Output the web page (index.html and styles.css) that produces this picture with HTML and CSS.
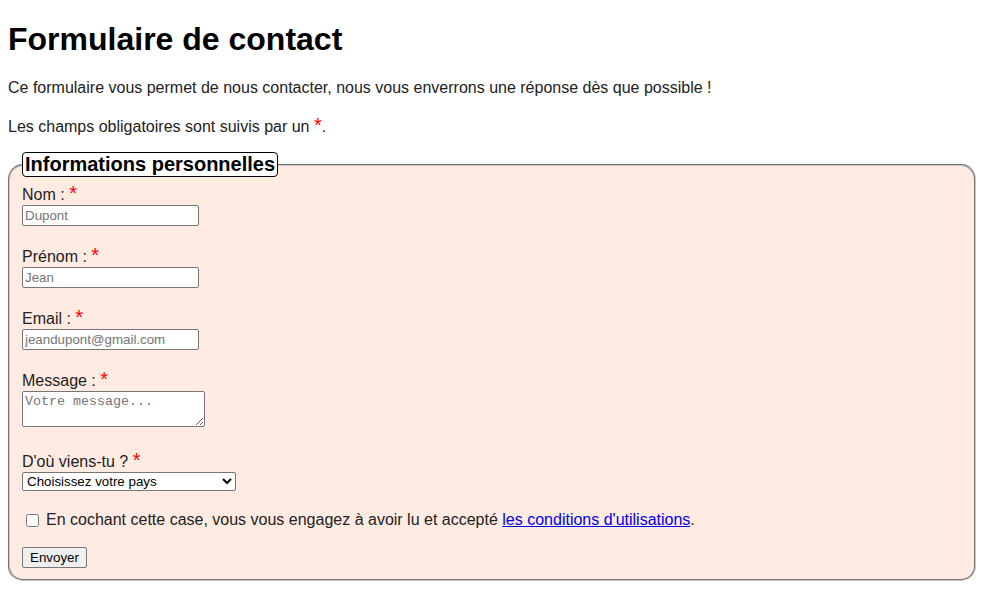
FILE: index.html
```html
<!DOCTYPE html>
<html lang="fr">
<head>
<meta charset="utf-8">
<title>Formulaire de contact</title>
<link rel="stylesheet" href="styles.css">
</head>
<body>
<h1 class="title">Formulaire de contact</h1>
<p class="intro">Ce formulaire vous permet de nous contacter, nous vous enverrons une réponse dès que possible !</p>
<p class="intro intro-second">Les champs obligatoires sont suivis par un <span class="req">*</span>.</p>
<form class="form">
  <fieldset class="box">
    <legend class="box-legend">Informations personnelles</legend>
    <div class="field">
      <label class="field-label" for="nom">Nom : <span class="req">*</span></label>
      <input class="text-input" type="text" id="nom" placeholder="Dupont">
    </div>
    <div class="field">
      <label class="field-label" for="prenom">Prénom : <span class="req">*</span></label>
      <input class="text-input" type="text" id="prenom" placeholder="Jean">
    </div>
    <div class="field">
      <label class="field-label" for="email">Email : <span class="req">*</span></label>
      <input class="text-input" type="email" id="email" placeholder="jeandupont@gmail.com">
    </div>
    <div class="field field-msg">
      <label class="field-label" for="msg">Message : <span class="req">*</span></label>
      <textarea class="text-area" id="msg" placeholder="Votre message..."></textarea>
    </div>
    <div class="field field-select">
      <label class="field-label" for="pays">D'où viens-tu ? <span class="req">*</span></label>
      <select class="select" id="pays">
        <option>Choisissez votre pays</option>
      </select>
    </div>
    <div class="check-row">
      <input class="check" type="checkbox" id="cgu">
      <label class="check-label" for="cgu">En cochant cette case, vous vous engagez à avoir lu et accepté <a class="link" href="#">les conditions d'utilisations</a>.</label>
    </div>
    <div class="actions">
      <button class="btn" type="button">Envoyer</button>
    </div>
  </fieldset>
</form>
</body>
</html>
```
FILE: styles.css
```css
html, body {
  background: #fff;
}
body {
  margin: 8px;
  font-family: "Liberation Sans", Arial, sans-serif;
  font-size: 16px;
  color: #222;
}
.title {
  font-size: 32px;
  font-weight: bold;
  color: #000;
  margin: 13px 0 21px;
}
.intro {
  margin: 16px 0;
}
.intro-second {
  margin-top: 18px;
}
.req {
  color: #f00;
  font-size: 20px;
  line-height: 1;
}
.form {
  margin: 0;
}
.box {
  margin: 0;
  padding: 5px 12px 11px;
  border: 2px groove #c8c8c8;
  border-radius: 15px;
  background: #ffebe2;
}
.box-legend {
  font-size: 20px;
  font-weight: bold;
  color: #000;
  background: #fff;
  border: 1px solid #000;
  border-radius: 4px;
  padding: 0 2px;
  line-height: 23px;
}
.field {
  display: flex;
  flex-direction: column;
  align-items: flex-start;
  margin-bottom: 18px;
}
.field-label {
  height: 23px;
  line-height: 25px;
}
.text-input {
  box-sizing: border-box;
  width: 177px;
  height: 21px;
  margin: 0;
  padding: 1px 2px;
  font-family: "Liberation Sans", Arial, sans-serif;
  font-size: 13.33px;
  border: 1px solid #767676;
  border-radius: 2px;
  background: #fff;
}
.text-input::placeholder {
  color: #757575;
}
.text-area {
  box-sizing: border-box;
  width: 183px;
  height: 36px;
  margin: 0;
  padding: 2px;
  font-family: "Liberation Mono", "Courier New", monospace;
  font-size: 13.33px;
  border: 1px solid #767676;
  border-radius: 2px;
  background: #fff;
}
.text-area::placeholder {
  color: #757575;
}
.field-msg {
  margin-bottom: 22px;
}
.field-select {
  margin-bottom: 20px;
}
.select {
  box-sizing: border-box;
  width: 214px;
  height: 19px;
  margin: 0;
  font-family: "Liberation Sans", Arial, sans-serif;
  font-size: 13.33px;
  color: #000;
  border: 1px solid #767676;
  border-radius: 2px;
  background: #fff;
}
.check-row {
  display: flex;
  align-items: center;
  height: 18px;
  margin-bottom: 18px;
}
.check {
  width: 13px;
  height: 13px;
  margin: 0 7px 0 4px;
}
.check-label {
  line-height: 18px;
}
.link {
  color: #0000ee;
  text-decoration: underline;
}
.actions {
  display: flex;
}
.btn {
  box-sizing: border-box;
  height: 21px;
  padding: 1px 7px;
  font-family: "Liberation Sans", Arial, sans-serif;
  font-size: 13.33px;
  color: #000;
  background: #efefef;
  border: 1px solid #767676;
  border-radius: 2px;
}
```
